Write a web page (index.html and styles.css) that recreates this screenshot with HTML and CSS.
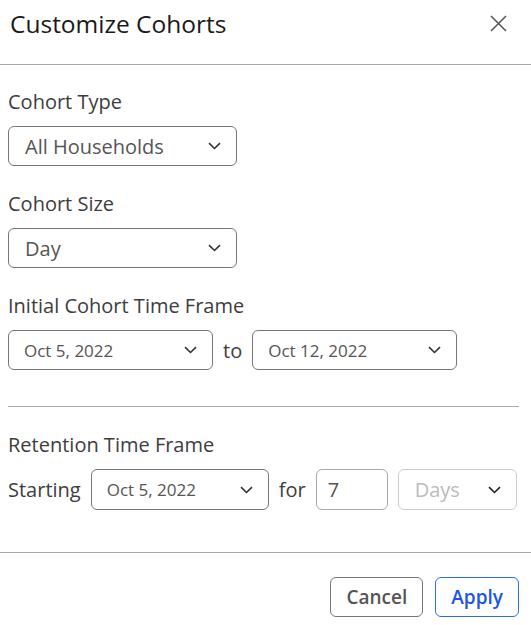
FILE: index.html
```html
<!DOCTYPE html>
<html lang="en">
<head>
    <meta charset="UTF-8">
    <meta name="viewport" content="width=device-width, initial-scale=1.0">
    <title>Customize Cohorts</title>
    <link rel="stylesheet" href="styles.css">
</head>
<body>
    <div class="modal">
        <div class="modal-header">
            <h2>Customize Cohorts</h2>
            <button class="close-btn" aria-label="Close">
                <svg width="17" height="17" viewBox="0 0 17 17"><path d="M1 1L16 16M16 1L1 16" stroke="#555" stroke-width="1.5" fill="none"/></svg>
            </button>
        </div>

        <div class="modal-body">
            <div class="field">
                <label>Cohort Type</label>
                <div class="dropdown wide">
                    <span>All Households</span>
                    <svg class="chevron" width="13" height="8" viewBox="0 0 13 8"><path d="M1 1.2L6.5 6.5L12 1.2" stroke="#333" stroke-width="1.6" fill="none"/></svg>
                </div>
            </div>

            <div class="field">
                <label>Cohort Size</label>
                <div class="dropdown wide">
                    <span>Day</span>
                    <svg class="chevron" width="13" height="8" viewBox="0 0 13 8"><path d="M1 1.2L6.5 6.5L12 1.2" stroke="#333" stroke-width="1.6" fill="none"/></svg>
                </div>
            </div>

            <div class="field">
                <label>Initial Cohort Time Frame</label>
                <div class="row">
                    <div class="dropdown date">
                        <span>Oct 5, 2022</span>
                        <svg class="chevron" width="13" height="8" viewBox="0 0 13 8"><path d="M1 1.2L6.5 6.5L12 1.2" stroke="#333" stroke-width="1.6" fill="none"/></svg>
                    </div>
                    <span class="inline-text">to</span>
                    <div class="dropdown date">
                        <span>Oct 12, 2022</span>
                        <svg class="chevron" width="13" height="8" viewBox="0 0 13 8"><path d="M1 1.2L6.5 6.5L12 1.2" stroke="#333" stroke-width="1.6" fill="none"/></svg>
                    </div>
                </div>
            </div>
        </div>

        <hr class="inner-divider">

        <div class="modal-body">
            <div class="field">
                <label>Retention Time Frame</label>
                <div class="row">
                    <span class="inline-text">Starting</span>
                    <div class="dropdown date start">
                        <span>Oct 5, 2022</span>
                        <svg class="chevron" width="13" height="8" viewBox="0 0 13 8"><path d="M1 1.2L6.5 6.5L12 1.2" stroke="#333" stroke-width="1.6" fill="none"/></svg>
                    </div>
                    <span class="inline-text">for</span>
                    <div class="number-box">7</div>
                    <div class="dropdown unit disabled">
                        <span>Days</span>
                        <svg class="chevron" width="13" height="8" viewBox="0 0 13 8"><path d="M1 1.2L6.5 6.5L12 1.2" stroke="#222" stroke-width="1.6" fill="none"/></svg>
                    </div>
                </div>
            </div>
        </div>

        <div class="modal-footer">
            <button class="btn">Cancel</button>
            <button class="btn primary">Apply</button>
        </div>
    </div>
</body>
</html>
```

FILE: styles.css
```css
body {
    margin: 0;
    font-family: "Open Sans", "Noto Sans", sans-serif;
    background-color: #fff;
    color: #444;
}
.modal {
    width: 531px;
}
.modal-header {
    display: flex;
    justify-content: space-between;
    align-items: flex-start;
    height: 55px;
    padding: 9px 24px 0 10px;
    border-bottom: 1px solid #aaa;
    margin-bottom: 15px;
}
h2 {
    margin: 0;
    font-size: 24.5px;
    line-height: 30px;
    font-weight: 500;
    color: #1a1a1a;
}
.close-btn {
    background: none;
    border: none;
    padding: 0;
    display: flex;
    margin-top: 6px;
    cursor: pointer;
}
.modal-body {
    padding: 10px 8px 0;
}
.field {
    margin-bottom: 26px;
}
.field:last-child {
    margin-bottom: 0;
}
label {
    display: block;
    font-size: 20px;
    font-weight: 500;
    line-height: 24px;
    color: #3d3d3d;
    margin-bottom: 12px;
}
.row {
    display: flex;
    align-items: center;
    gap: 10px;
}
.dropdown {
    display: flex;
    align-items: center;
    justify-content: space-between;
    box-sizing: border-box;
    height: 40px;
    padding: 0 15px 0 16px;
    border: 1px solid #777;
    border-radius: 6px;
    font-size: 20px;
    font-weight: 500;
    color: #555;
}
.dropdown.wide {
    width: 229px;
}
.dropdown.date {
    width: 205px;
    font-size: 17px;
    font-weight: 400;
    padding: 0 15px 0 15px;
}
.dropdown.start {
    width: 178px;
    height: 41px;
}
.dropdown.unit {
    width: 119px;
    height: 41px;
    font-size: 20px;
}
.dropdown.disabled {
    border-color: #ccc;
    color: #bbb;
}
.inline-text {
    font-size: 20px;
    font-weight: 500;
    color: #3d3d3d;
}
.number-box {
    box-sizing: border-box;
    width: 72px;
    height: 41px;
    padding: 0 11px;
    display: flex;
    align-items: center;
    border: 1px solid #aaa;
    border-radius: 6px;
    font-size: 20px;
    color: #555;
}
.inner-divider {
    margin: 36px 12px 16px 8px;
    border: none;
    border-top: 1px solid #aaa;
}
.modal-footer {
    display: flex;
    justify-content: flex-end;
    gap: 12px;
    margin-top: 42px;
    padding: 24px 12px 0;
    border-top: 1px solid #aaa;
}
.btn {
    height: 40px;
    padding: 0 15px;
    background: #fff;
    border: 1px solid #777;
    border-radius: 6px;
    font-family: inherit;
    font-size: 19px;
    font-weight: 600;
    color: #555;
    cursor: pointer;
}
.btn.primary {
    border-color: #2d6cf2;
    color: #1a55e6;
}
```
